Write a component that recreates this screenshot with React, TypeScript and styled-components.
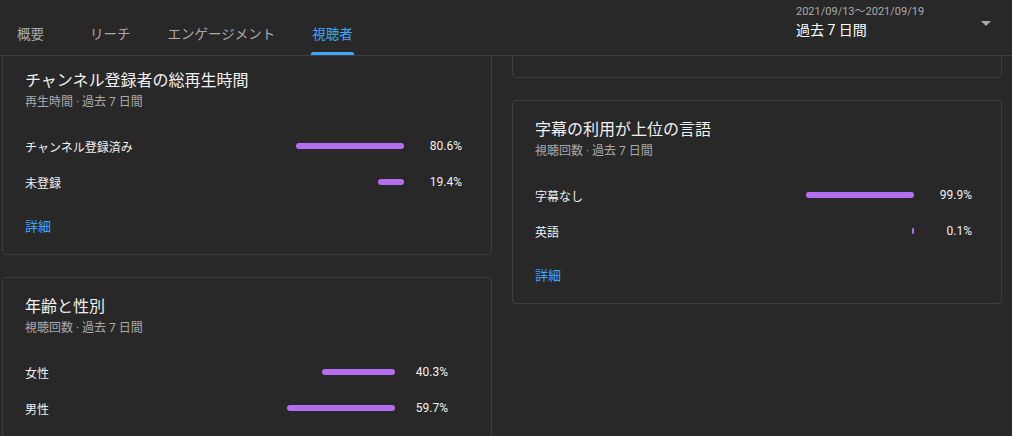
import React from 'react'
import styled, { createGlobalStyle } from 'styled-components'

const GlobalStyle = createGlobalStyle`
  html, body {
    margin: 0;
    padding: 0;
    background: #282828;
  }
  body {
    font-family: Roboto, "Noto Sans CJK JP", sans-serif;
    color: #f1f1f1;
  }
  * {
    box-sizing: border-box;
  }
`

const Page = styled.div`
  width: 1012px;
  height: 436px;
  display: flex;
  flex-direction: column;
  overflow: hidden;
  background: #282828;
`

const Header = styled.header`
  height: 56px;
  flex: none;
  display: flex;
  justify-content: space-between;
  border-bottom: 1px solid #3e3e3e;
  position: relative;
  z-index: 1;
  background: #282828;
`

const Tabs = styled.nav`
  display: flex;
  align-items: stretch;
  padding-left: 17px;
  gap: 37px;
`

const Tab = styled.div<{ active?: boolean }>`
  position: relative;
  display: flex;
  align-items: center;
  min-width: 36px;
  padding-top: 11px;
  font-size: 13.5px;
  color: ${p => (p.active ? '#3ea6ff' : '#aaaaaa')};
  cursor: pointer;
  &::after {
    content: '';
    display: ${p => (p.active ? 'block' : 'none')};
    position: absolute;
    left: -1px;
    right: -1px;
    bottom: 0;
    height: 3px;
    border-radius: 2px 2px 0 0;
    background: #3ea6ff;
  }
`

const DateSelect = styled.div`
  width: 216px;
  display: flex;
  justify-content: space-between;
  align-items: flex-start;
  padding: 4px 21px 0 0;
  cursor: pointer;
`

const DateText = styled.div`
  display: flex;
  flex-direction: column;
`

const DateRange = styled.span`
  font-size: 11px;
  line-height: 16px;
  color: #aaaaaa;
`

const DateLabel = styled.span`
  font-size: 14px;
  line-height: 20px;
  font-weight: 400;
  color: #ffffff;
`

const Caret = styled.span`
  margin-top: 17px;
  width: 0;
  height: 0;
  border-left: 5px solid transparent;
  border-right: 5px solid transparent;
  border-top: 5px solid #aaaaaa;
`

const Body = styled.main`
  flex: 1;
  overflow: hidden;
  display: flex;
  gap: 20px;
  padding-left: 2px;
`

const Column = styled.div<{ offset: number }>`
  width: 490px;
  flex: none;
  display: flex;
  flex-direction: column;
  gap: 22px;
  margin-top: ${p => p.offset}px;
`

const Card = styled.section`
  border: 1px solid #3e3e3e;
  border-radius: 4px;
  padding: 17px 0 17px 22px;
  flex: none;
`

const Title = styled.h2`
  margin: 0;
  font-size: 16px;
  line-height: 24px;
  font-weight: 400;
  color: #f1f1f1;
`

const Subtitle = styled.div`
  font-size: 12px;
  line-height: 18px;
  color: #aaaaaa;
`

const Rows = styled.div<{ padRight: number; pctWidth: number }>`
  display: grid;
  grid-template-columns: 1fr 108px ${p => p.pctWidth}px;
  grid-auto-rows: 36px;
  align-items: center;
  margin-top: 17px;
  padding-right: ${p => p.padRight}px;
`

const Label = styled.span`
  font-size: 12px;
  color: #f1f1f1;
`

const BarCell = styled.div`
  display: flex;
  justify-content: flex-end;
`

const Bar = styled.div`
  height: 6px;
  border-radius: 3px;
  background: #b66ef1;
`

const Pct = styled.span`
  font-size: 12px;
  text-align: right;
  color: #f1f1f1;
`

const More = styled.a`
  display: block;
  margin-top: 17px;
  font-size: 13px;
  line-height: 20px;
  color: #3ea6ff;
  text-decoration: none;
  cursor: pointer;
`

type Row = { label: string; value: number }

interface StatCardProps {
  title: string
  subtitle: string
  rows: Row[]
  padRight?: number
  pctWidth?: number
}

const StatCard: React.FC<StatCardProps> = ({ title, subtitle, rows, padRight = 29, pctWidth = 58 }) => {
  const max = Math.max(...rows.map(r => r.value))
  return (
    <Card>
      <Title>{title}</Title>
      <Subtitle>{subtitle}</Subtitle>
      <Rows padRight={padRight} pctWidth={pctWidth}>
        {rows.map(r => (
          <React.Fragment key={r.label}>
            <Label>{r.label}</Label>
            <BarCell>
              <Bar style={{ width: Math.max(2, Math.round((r.value / max) * 108)) }} />
            </BarCell>
            <Pct>{r.value.toFixed(1)}%</Pct>
          </React.Fragment>
        ))}
      </Rows>
      <More>詳細</More>
    </Card>
  )
}

const tabs = ['概要', 'リーチ', 'エンゲージメント', '視聴者']

const App: React.FC = () => (
  <Page>
    <GlobalStyle />
    <Header>
      <Tabs>
        {tabs.map(t => (
          <Tab key={t} active={t === '視聴者'}>
            {t}
          </Tab>
        ))}
      </Tabs>
      <DateSelect>
        <DateText>
          <DateRange>2021/09/13～2021/09/19</DateRange>
          <DateLabel>過去 7 日間</DateLabel>
        </DateText>
        <Caret />
      </DateSelect>
    </Header>
    <Body>
      <Column offset={-5}>
        <StatCard
          title="チャンネル登録者の総再生時間"
          subtitle="再生時間 · 過去 7 日間"
          rows={[
            { label: 'チャンネル登録済み', value: 80.6 },
            { label: '未登録', value: 19.4 }
          ]}
        />
        <StatCard
          title="年齢と性別"
          subtitle="視聴回数 · 過去 7 日間"
          padRight={43}
          pctWidth={53}
          rows={[
            { label: '女性', value: 40.3 },
            { label: '男性', value: 59.7 }
          ]}
        />
      </Column>
      <Column offset={-182}>
        <StatCard
          title="上位の地域"
          subtitle="視聴回数 · 過去 7 日間"
          rows={[
            { label: '日本', value: 92.4 },
            { label: 'アメリカ合衆国', value: 7.6 }
          ]}
        />
        <StatCard
          title="字幕の利用が上位の言語"
          subtitle="視聴回数 · 過去 7 日間"
          rows={[
            { label: '字幕なし', value: 99.9 },
            { label: '英語', value: 0.1 }
          ]}
        />
      </Column>
    </Body>
  </Page>
)

export default App
